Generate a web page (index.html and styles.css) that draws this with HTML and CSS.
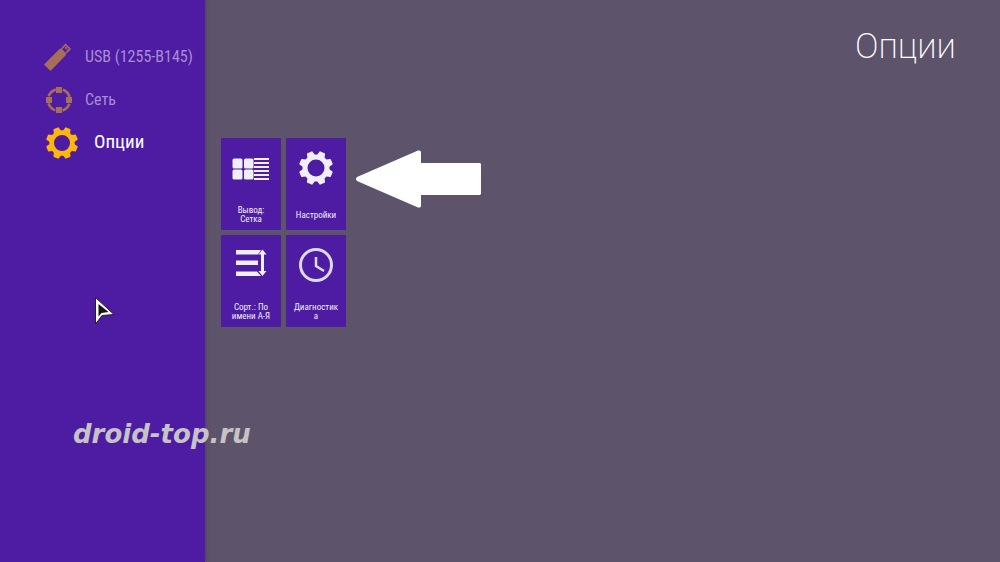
FILE: index.html
```html
<!DOCTYPE html>
<html lang="ru">
<head>
    <meta charset="UTF-8">
    <meta name="viewport" content="width=device-width, initial-scale=1.0">
    <title>Опции</title>
    <link rel="stylesheet" href="styles.css">
</head>
<body>
    <svg width="0" height="0" class="sprite" aria-hidden="true">
        <defs>
            <path id="tooth" d="M-4.4-11 L-3-16.6 Q-2.8-17 -2.2-17 H2.2 Q2.8-17 3-16.6 L4.4-11z"/>
            <symbol id="gear" viewBox="-17 -17 34 34">
                <circle r="11" fill="none" stroke="currentColor" stroke-width="5"/>
                <g fill="currentColor">
                    <use href="#tooth" transform="rotate(22.5)"/>
                    <use href="#tooth" transform="rotate(67.5)"/>
                    <use href="#tooth" transform="rotate(112.5)"/>
                    <use href="#tooth" transform="rotate(157.5)"/>
                    <use href="#tooth" transform="rotate(202.5)"/>
                    <use href="#tooth" transform="rotate(247.5)"/>
                    <use href="#tooth" transform="rotate(292.5)"/>
                    <use href="#tooth" transform="rotate(337.5)"/>
                </g>
            </symbol>
        </defs>
    </svg>

    <div class="screen">
        <nav class="sidebar">
            <a href="#" class="menu-item">
                <svg class="menu-icon" viewBox="0 0 28 28">
                    <path fill="currentColor" d="M0 21.500 L15 6.500 Q16.500 5 18 6 L21.500 9.500 Q22.500 11 21.500 12.500 L6.500 28z"/>
                    <path fill="none" stroke="currentColor" stroke-width="1.500" d="M17.500 6 L21.500 1.500 L26 6 L22 10"/>
                    <path fill="currentColor" d="M20.500 5l1.500-1.500 1.500 1.500-1.500 1.500zM22.500 7.500l1.500-1.500 1 1-1.500 1.500z"/>
                </svg>
                <span>USB (1255-B145)</span>
            </a>
            <a href="#" class="menu-item">
                <svg class="menu-icon" viewBox="0 0 28 28">
                    <circle cx="15" cy="14" r="11" fill="none" stroke="currentColor" stroke-width="2.600" stroke-dasharray="10 7.279" stroke-dashoffset="-3.640"/>
                    <g fill="currentColor">
                        <rect x="12" y="1" width="6" height="6"/>
                        <rect x="12" y="21" width="6" height="6"/>
                        <rect x="2" y="11" width="6" height="6"/>
                        <rect x="22" y="11" width="6" height="6"/>
                    </g>
                </svg>
                <span>Сеть</span>
            </a>
            <a href="#" class="menu-item active">
                <svg class="menu-icon"><use href="#gear"/></svg>
                <span>Опции</span>
            </a>
        </nav>

        <main class="content">
            <h1>Опции</h1>
            <div class="tiles">
                <button type="button" class="tile">
                    <svg class="tile-icon" viewBox="0 0 38 38">
                        <g fill="currentColor">
                            <rect x="0.500" y="9.500" width="10" height="10" rx="1.500"/>
                            <rect x="12" y="9.500" width="9.500" height="10" rx="1.500"/>
                            <rect x="0.500" y="20.500" width="10" height="10" rx="1.500"/>
                            <rect x="12" y="20.500" width="9.500" height="10" rx="1.500"/>
                        </g>
                        <path stroke="currentColor" stroke-width="2" d="M22 10h15M22 14h15M22 18h15M22 22h15M22 26h15M22 30h15"/>
                    </svg>
                    <span>Вывод: Сетка</span>
                </button>
                <button type="button" class="tile">
                    <svg class="tile-icon" viewBox="0 0 38 38"><use href="#gear" x="2" y="2" width="34" height="34"/></svg>
                    <span>Настройки</span>
                </button>
                <button type="button" class="tile">
                    <svg class="tile-icon" viewBox="0 0 38 38">
                        <g fill="currentColor">
                            <path d="M4 4h25l-3 4.500H4z"/>
                            <rect x="4" y="14.500" width="22" height="4.500"/>
                            <path d="M4 25.500h21l4 4.500H4z"/>
                            <path d="M30.500 3.500l4 5h-2.500v16.500h2.500l-4 5-4-5h2.500V8.500h-2.500z"/>
                        </g>
                    </svg>
                    <span>Сорт.: По имени А-Я</span>
                </button>
                <button type="button" class="tile">
                    <svg class="tile-icon" viewBox="0 0 38 38">
                        <g fill="none" stroke="#dddaf0" stroke-width="3">
                            <circle cx="19" cy="19" r="15.500"/>
                            <path d="M19 11v9l8 5" stroke-width="2.500"/>
                        </g>
                    </svg>
                    <span>Диагностика</span>
                </button>
            </div>
        </main>

        <svg class="arrow" viewBox="0 0 125 58">
            <path fill="#fff" d="M1 27 L62 0.500 Q65 0 65 2 V13 H124 L125 14 V44 L124 45 H65 V56 Q65 58 62 57.500 L1 31 Q-1 29 1 27z"/>
        </svg>
        <svg class="cursor" viewBox="0 0 20 28">
            <path fill="#fff" stroke="#222" d="M0.500 0.500v26.500l6.500-8.500 12-1z"/>
            <path fill="#161616" d="M3.500 7v12.500l3-3.500 7-1z"/>
        </svg>
        <div class="watermark">droid-top.ru</div>
    </div>
</body>
</html>
```
FILE: styles.css
```css
* {
    box-sizing: border-box;
}
body {
    margin: 0;
    font-family: "Roboto Condensed", "Liberation Sans Narrow", Roboto, sans-serif;
    background-color: #5d536b;
    color: white;
}
.sprite {
    position: absolute;
}
.screen {
    position: relative;
    display: flex;
    min-height: 100vh;
}
.sidebar {
    flex: 0 0 205px;
    padding: 35px 0 0 44px;
    background-color: #4d1ca2;
    box-shadow: 0 0 4px rgba(50, 20, 90, 0.5);
}
.menu-item {
    display: flex;
    align-items: center;
    gap: 13px;
    height: 43px;
    font-size: 16px;
    color: #aa8dd4;
    text-decoration: none;
    white-space: nowrap;
}
.menu-icon {
    flex: none;
    width: 28px;
    height: 28px;
    color: #a66f59;
}
.menu-item.active {
    gap: 16px;
    padding-left: 2px;
    font-size: 19px;
    color: white;
}
.active .menu-icon {
    width: 32px;
    height: 32px;
    color: #fdb60d;
}
.active span {
    padding-bottom: 3px;
}
.content {
    flex: 1;
    padding: 26px 16px;
}
h1 {
    margin: 0 28px 70px 0;
    font-family: Roboto, sans-serif;
    font-size: 35px;
    font-weight: 200;
    line-height: 42px;
    text-align: right;
}
.tiles {
    display: grid;
    grid-template-columns: repeat(2, 60px);
    gap: 5px;
}
.tile {
    display: flex;
    flex-direction: column;
    align-items: center;
    justify-content: space-between;
    height: 92px;
    padding: 11px 7px 6px;
    border: none;
    border-radius: 1px;
    background-color: #4d1ca2;
    color: #f0eef6;
    font-family: inherit;
    font-size: 9px;
    line-height: 9px;
    cursor: pointer;
}
.tile-icon {
    flex: none;
    width: 38px;
    height: 38px;
}
.tile span {
    display: flex;
    align-items: center;
    justify-content: center;
    width: 100%;
    min-height: 18px;
    overflow-wrap: anywhere;
}
.arrow {
    position: absolute;
    left: 356px;
    top: 150px;
    width: 125px;
    height: 58px;
}
.cursor {
    position: absolute;
    left: 95px;
    top: 297px;
    width: 20px;
    height: 28px;
}
.watermark {
    position: absolute;
    left: 73px;
    top: 420px;
    font-family: "DejaVu Sans", sans-serif;
    font-size: 26px;
    font-style: italic;
    font-weight: bold;
    line-height: 28px;
    color: #c5c3c4;
}
```
